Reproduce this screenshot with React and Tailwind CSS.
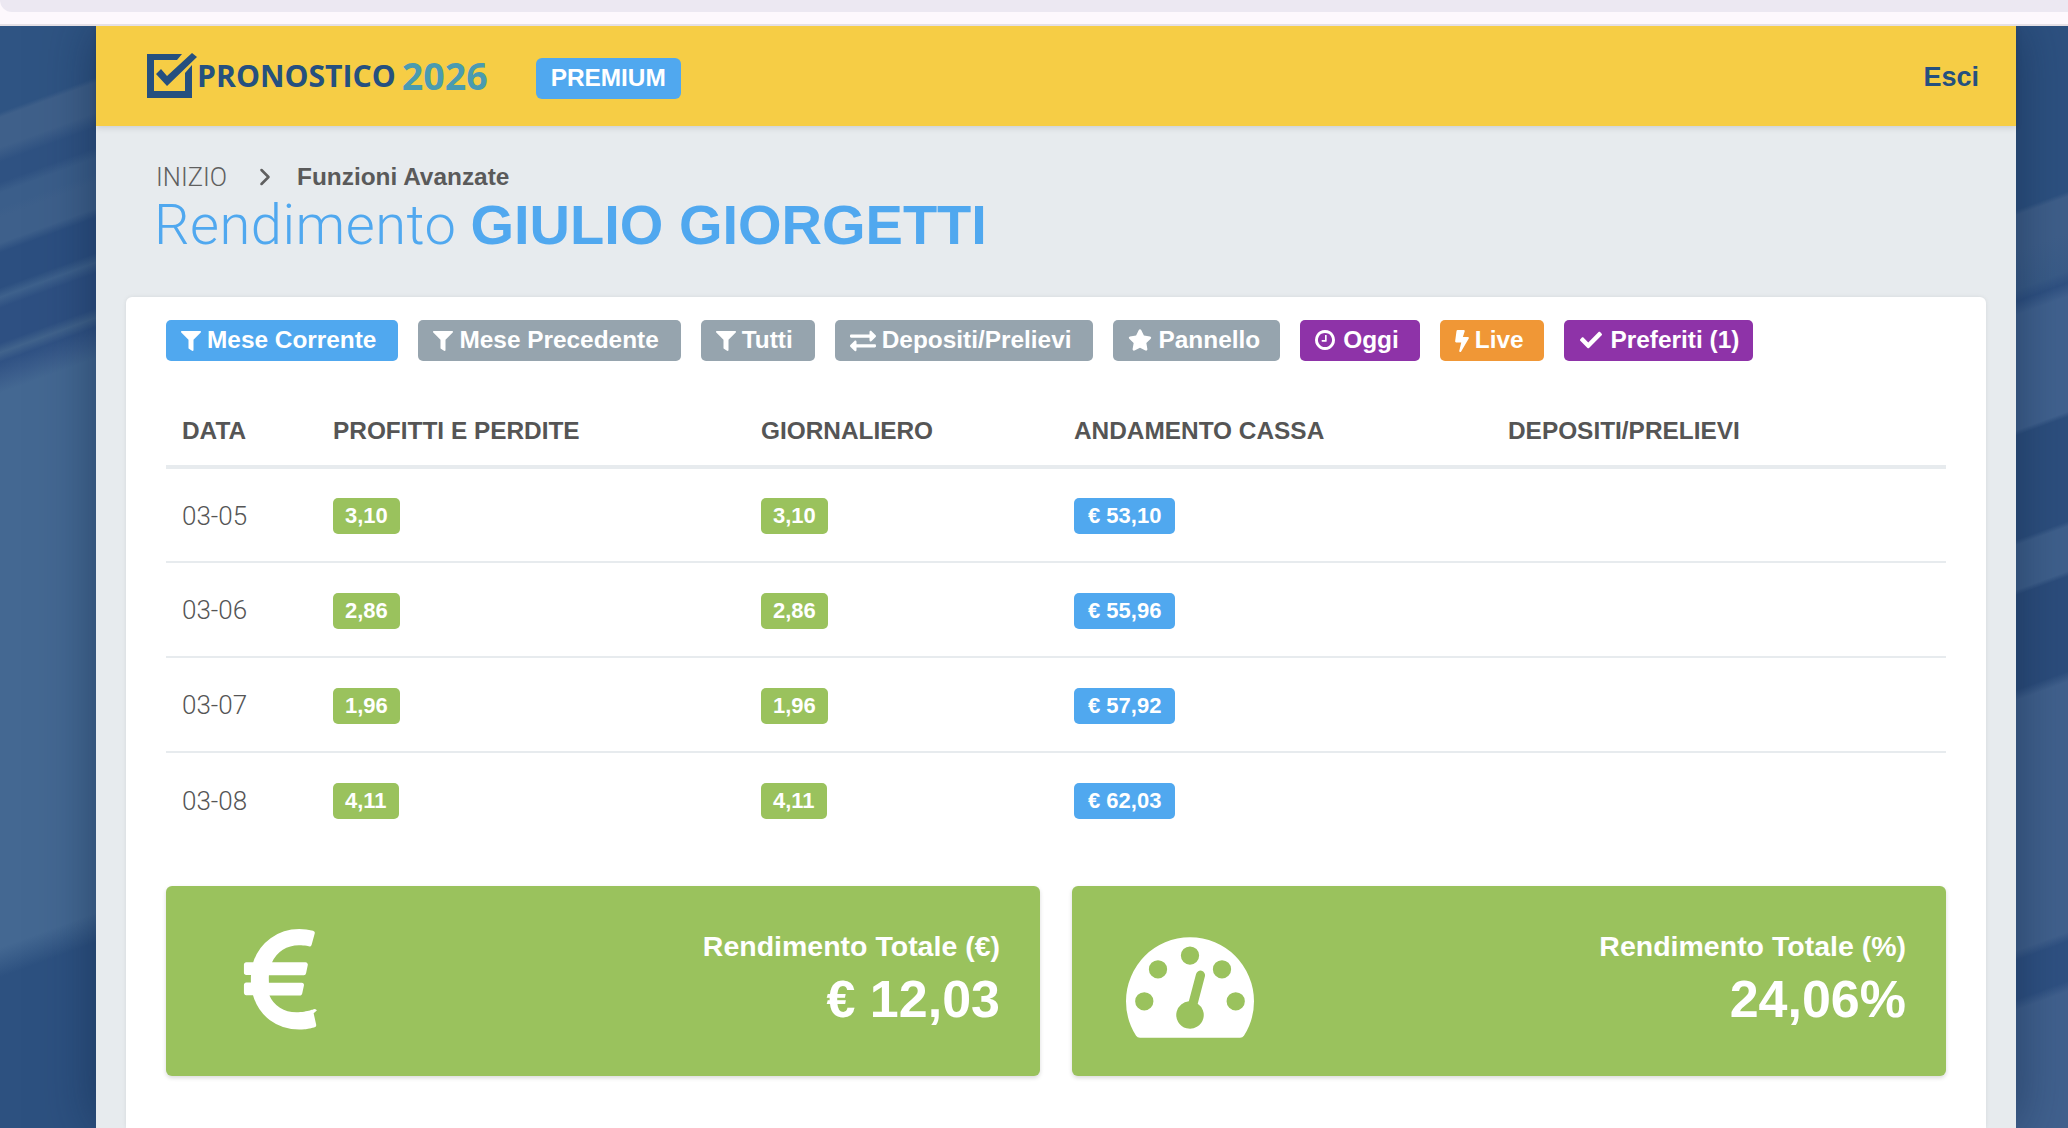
import React from "react";
import { ChevronRight } from "lucide-react";
import { FaFilter, FaExchangeAlt, FaStar, FaBolt, FaCheck } from "react-icons/fa";

function ClockIcon({ className }) {
  return (
    <svg viewBox="128 128 1536 1536" fill="currentColor" className={className}>
      <path d="M1024 544v448q0 14-9 23t-23 9h-320q-14 0-23-9t-9-23v-64q0-14 9-23t23-9h224v-352q0-14 9-23t23-9h64q14 0 23 9t9 23zm416 352q0-148-73-273t-198-198-273-73-273 73-198 198-73 273 73 273 198 198 273 73 273-73 198-198 73-273zm224 0q0 209-103 385.5t-279.5 279.5-385.5 103-385.5-103-279.5-279.5-103-385.5 103-385.5 279.5-279.5 385.5-103 385.5 103 279.5 279.5 103 385.5z" />
    </svg>
  );
}

const filters = [
  { icon: FaFilter, size: "h-[20px] w-[20px]", label: "Mese Corrente", bg: "bg-[#50a8ef]", pad: "gap-[6px] pl-[15px] pr-[22px]" },
  { icon: FaFilter, size: "h-[20px] w-[20px]", label: "Mese Precedente", bg: "bg-[#96a4ae]", pad: "gap-[6px] pl-[15px] pr-[22px]" },
  { icon: FaFilter, size: "h-[20px] w-[20px]", label: "Tutti", bg: "bg-[#96a4ae]", pad: "gap-[6px] pl-[15px] pr-[22px]" },
  { icon: FaExchangeAlt, size: "h-[26px] w-[26px]", label: "Depositi/Prelievi", bg: "bg-[#96a4ae]", pad: "gap-[6px] pl-[15px] pr-[21px]" },
  { icon: FaStar, size: "mb-[2px] h-[22px] w-[24px]", label: "Pannello", bg: "bg-[#96a4ae]", pad: "gap-[7px] pl-[15px] pr-[20px]" },
  { icon: ClockIcon, size: "mb-[2px] h-[20px] w-[20px]", label: "Oggi", bg: "bg-[#8e33a8]", pad: "gap-[8px] pl-[15px] pr-[21px]" },
  { icon: FaBolt, size: "h-[22px] w-[14px]", label: "Live", bg: "bg-[#f09736]", pad: "gap-[6px] pl-[15px] pr-[20px]" },
  { icon: FaCheck, size: "mb-[2px] h-[22px] w-[22px]", label: "Preferiti (1)", bg: "bg-[#8e33a8]", pad: "gap-[9px] pl-[16px] pr-[14px]" },
];

const rows = [
  { date: "03-05", value: "3,10", cash: "€ 53,10" },
  { date: "03-06", value: "2,86", cash: "€ 55,96" },
  { date: "03-07", value: "1,96", cash: "€ 57,92" },
  { date: "03-08", value: "4,11", cash: "€ 62,03" },
];

function Badge({ children, color }) {
  return (
    <span className={`inline-flex h-9 items-center rounded-[5px] pb-[1px] text-[22px] font-bold text-white ${color}`}>
      {children}
    </span>
  );
}

function Logo() {
  return (
    <div className="flex items-center">
      <svg width="50" height="46" viewBox="0 -1 50 46">
        <path d="M0 0H35L30 6H7V37H38V19L45 11V44H0Z" fill="#25507f" />
        <path d="M9 20L14 15L20 22L45 -1L50 3L20 32Z" fill="#25507f" />
      </svg>
      <span className="font-['Open_Sans',sans-serif] text-[30.2px] font-bold text-[#25507f]">PRONOSTICO</span>
      <span className="ml-[6px] font-['Open_Sans',sans-serif] text-[37.5px] font-bold leading-none text-[#4a9bb0]">2026</span>
    </div>
  );
}

function StatCard({ icon, title, value }) {
  return (
    <div className="flex h-[190px] items-start justify-between rounded-[6px] bg-[#9ac25d] pr-10 shadow-[0_2px_4px_rgba(0,0,0,0.15)]">
      {icon}
      <div className="pt-[43px] text-right text-white">
        <div className="text-[28.5px] font-bold leading-[34px]">{title}</div>
        <div className="mt-[6px] text-[52px] font-bold leading-[60px]">{value}</div>
      </div>
    </div>
  );
}

export default function App() {
  return (
    <div className="flex h-screen flex-col overflow-hidden bg-[#fdf8fd] font-['Liberation_Sans',Arial,sans-serif]">
      <div className="h-3 rounded-bl-[16px] bg-[#ece8f2]"></div>
      <div className="h-3"></div>
      <div className="h-[2px] bg-[#e5e0e5]"></div>

      <div className="flex min-h-0 flex-1 overflow-hidden">
        <div className="w-[96px] flex-none bg-[linear-gradient(160deg,#2f5483_16px,#2f5483_81px,#3f608a_86px,#3f608a_114px,#2f5282_128px,#2f5282_147px,#3b5e8a_157px,#3b5e8a_171px,#3e608b_180px,#3e608b_204px,#2c4f80_213px,#2c4f80_246px,#3e618c_255px,#2e5082_265px,#2e5082_298px,#41638c_307px,#305284_316px,#3a5c8b_330px,#446892_345px,#446892_866px,#2d5180_894px,#2d5180_1052px)]"></div>

        <div className="relative z-10 flex flex-1 flex-col bg-[#e7ebee] shadow-[0_0_50px_rgba(10,30,60,0.5)]">
          <header className="flex h-[100px] flex-none items-center justify-between bg-[#f6cd45] pl-[51px] pr-[37px] shadow-[0_2px_6px_rgba(0,0,0,0.12)]">
            <div className="flex items-center">
              <Logo />
              <span className="ml-[48px] mt-[5px] flex h-[41px] items-center rounded-[6px] bg-[#50a8ef] px-[15px] text-[24.4px] font-bold text-white">
                PREMIUM
              </span>
            </div>
            <span className="mt-[2px] text-[27px] font-bold text-[#25507f]">Esci</span>
          </header>

          <div className="px-[60px] pt-[36px]">
            <div className="flex h-[30px] items-center text-[24.4px] text-[#5f5f5f]">
              <span className="font-['Roboto',sans-serif] text-[25.5px] font-light">INIZIO</span>
              <ChevronRight size={28} strokeWidth={2.2} className="ml-[24px] mr-[18px]" />
              <span className="font-bold text-[#5a5a5a]">Funzioni Avanzate</span>
            </div>
            <h1 className="-ml-[2px] text-[56px] leading-[66px] text-[#50a8ef]">
              <span className="font-['Roboto',sans-serif] font-light tracking-[0.5px]">Rendimento </span>
              <span className="font-bold">GIULIO GIORGETTI</span>
            </h1>
          </div>

          <main className="mx-[30px] mt-[39px] flex-1 rounded-t-[6px] bg-white px-[40px] pt-[23px] shadow-[0_0_4px_rgba(0,0,0,0.08)]">
            <div className="flex gap-5">
              {filters.map((f) => (
                <button
                  key={f.label}
                  className={`flex h-[41px] items-center rounded-[5px] text-[24.4px] font-bold text-white ${f.bg} ${f.pad}`}
                >
                  <f.icon className={f.size} />
                  {f.label}
                </button>
              ))}
            </div>

            <table className="mt-[23px] w-full table-fixed border-collapse text-left">
              <thead>
                <tr className="h-[83px] border-b-4 border-[#e7ebee] text-[24.4px] font-bold text-[#555]">
                  <th className="w-[151px] px-4 pb-[15px] align-bottom">DATA</th>
                  <th className="w-[428px] px-4 pb-[15px] align-bottom">PROFITTI E PERDITE</th>
                  <th className="w-[313px] px-4 pb-[15px] align-bottom">GIORNALIERO</th>
                  <th className="w-[434px] px-4 pb-[15px] align-bottom">ANDAMENTO CASSA</th>
                  <th className="px-4 pb-[15px] align-bottom">DEPOSITI/PRELIEVI</th>
                </tr>
              </thead>
              <tbody>
                {rows.map((r) => (
                  <tr key={r.date} className="h-[95px] border-b-2 border-[#e7ebee] last:border-b-0">
                    <td className="px-4 pt-[2px] font-['Roboto',sans-serif] text-[26px] font-light text-[#555]">{r.date}</td>
                    <td className="px-4 pt-[2px]">
                      <Badge color="bg-[#9ac25d] px-3">{r.value}</Badge>
                    </td>
                    <td className="px-4 pt-[2px]">
                      <Badge color="bg-[#9ac25d] px-3">{r.value}</Badge>
                    </td>
                    <td className="px-4 pt-[2px]">
                      <Badge color="bg-[#50a8ef] px-[14px]">{r.cash}</Badge>
                    </td>
                    <td className="px-4"></td>
                  </tr>
                ))}
              </tbody>
            </table>

            <div className="mt-[39px] grid grid-cols-2 gap-8">
              <StatCard
                title="Rendimento Totale (€)"
                value="€ 12,03"
                icon={
                  <svg width="115" height="128" viewBox="0 0 1024 1792" fill="white" className="ml-[57px] mt-[36px]">
                    <path d="M976 1277l35 159q3 12-3 22.5t-17 14.5l-5 1q-4 2-10.5 3.5t-16 4.5-21.5 5.5-25.5 5-30 5-33.5 4.5-36.5 3-38.5 1q-234 0-409-130.5t-238-351.5h-95q-13 0-22.5-9.5t-9.5-22.5v-113q0-13 9.5-22.5t22.5-9.5h66q-2-57 1-105h-67q-14 0-23-9t-9-23v-114q0-14 9-23t23-9h98q67-210 243.5-338t400.5-128q102 0 194 23 11 3 20 15 6 11 3 24l-43 159q-3 13-14 19.5t-24 2.5l-4-1q-4-1-11.5-2.5l-17.5-3.5-22.5-3.5-26-3-29-2.5-29.5-1q-126 0-226 64t-150 176h468q16 0 25 12 10 12 7 26l-24 114q-5 28-32 28h-488q-3 37 0 105h459q15 0 25 12 9 12 6 27l-24 112q-2 13-12 21t-23 8h-424q47 109 147 172t230 63q28 0 56-2.5t51.5-6 46-8.5 37-9 27-8 16.5-6l7-3q13-5 27-1 13 6 19 19z" />
                  </svg>
                }
              />
              <StatCard
                title="Rendimento Totale (%)"
                value="24,06%"
                icon={
                  <svg width="128" height="128" viewBox="0 0 1792 1792" fill="white" fillRule="evenodd" className="ml-[54px] mt-[33px]">
                    <path d="M384 1152q0-53-37.5-90.5t-90.5-37.5-90.5 37.5-37.5 90.5 37.5 90.5 90.5 37.5 90.5-37.5 37.5-90.5zm192-448q0-53-37.5-90.5t-90.5-37.5-90.5 37.5-37.5 90.5 37.5 90.5 90.5 37.5 90.5-37.5 37.5-90.5zm428 481l101-382q6-26-7.5-48.5t-38.5-29.5-48 6.5-30 39.5l-101 382q-60 5-107 43.5t-63 98.5q-20 77 20 146t117 89 146-20 89-117q16-60-6-117t-72-91zm660-33q0-53-37.5-90.5t-90.5-37.5-90.5 37.5-37.5 90.5 37.5 90.5 90.5 37.5 90.5-37.5 37.5-90.5zm-640-640q0-53-37.5-90.5t-90.5-37.5-90.5 37.5-37.5 90.5 37.5 90.5 90.5 37.5 90.5-37.5 37.5-90.5zm448 192q0-53-37.5-90.5t-90.5-37.5-90.5 37.5-37.5 90.5 37.5 90.5 90.5 37.5 90.5-37.5 37.5-90.5zm320 448q0 261-141 483-19 29-54 29h-1402q-35 0-54-29-141-221-141-483 0-182 71-348t191-286 286-191 348-71 348 71 286 191 191 286 71 348z" />
                  </svg>
                }
              />
            </div>
          </main>
        </div>

        <div className="w-[52px] flex-none bg-[linear-gradient(160deg,#2d5180_9px,#2d5180_173px,#3f5f8a_178px,#3f5f8a_211px,#3a5c88_248px,#2f5182_259px,#41628f_272px,#41628f_380px,#2d4f7e_385px,#2d4f7e_483px,#3f608c_488px,#3f608c_530px,#2c4d7c_535px,#2c4d7c_624px,#41618d_634px,#41618d_869px,#2f5182_878px,#2f5182_915px,#41618e_925px)]"></div>
      </div>
    </div>
  );
}
